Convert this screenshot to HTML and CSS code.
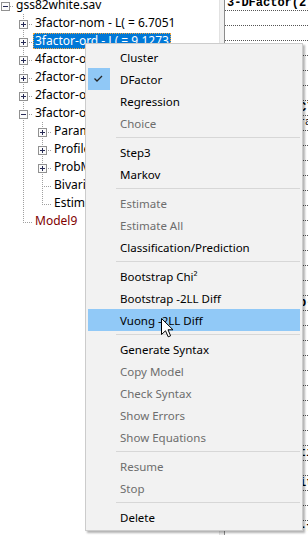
FILE: index.html
```html
<!DOCTYPE html>
<html>
  <head>
    <title>gss82white.sav</title>
    <link rel="stylesheet" href="styles.css">
  </head>
  <body>
    <div class="window">
      <div class="tree">
        <div class="tree-list">
          <div class="node">
            <span class="cell root"><span class="box minus"></span></span>
            <span class="label">gss82white.sav</span>
          </div>
          <div class="node">
            <span class="cell first"></span>
            <span class="cell tee"><span class="box plus"></span></span>
            <span class="label">3factor-nom - L( = 6.7051</span>
          </div>
          <div class="node">
            <span class="cell first"></span>
            <span class="cell tee"><span class="box plus"></span></span>
            <span class="label selected">3factor-ord - L( = 9.1273</span>
          </div>
          <div class="node">
            <span class="cell first"></span>
            <span class="cell tee"><span class="box plus"></span></span>
            <span class="label">4factor-ord - L( = 5.1068</span>
          </div>
          <div class="node">
            <span class="cell first"></span>
            <span class="cell tee"><span class="box plus"></span></span>
            <span class="label">2factor-ord - L( = 17.4820</span>
          </div>
          <div class="node">
            <span class="cell first"></span>
            <span class="cell tee"><span class="box plus"></span></span>
            <span class="label">2factor-ord - L( = 15.2031</span>
          </div>
          <div class="node">
            <span class="cell first"></span>
            <span class="cell tee"><span class="box minus"></span></span>
            <span class="label">3factor-ord - L( = 9.1273</span>
          </div>
          <div class="node">
            <span class="cell first"></span>
            <span class="cell vline"></span>
            <span class="cell tee"><span class="box plus"></span></span>
            <span class="label">Parameters</span>
          </div>
          <div class="node">
            <span class="cell first"></span>
            <span class="cell vline"></span>
            <span class="cell tee"><span class="box plus"></span></span>
            <span class="label">Profile</span>
          </div>
          <div class="node">
            <span class="cell first"></span>
            <span class="cell vline"></span>
            <span class="cell tee"><span class="box plus"></span></span>
            <span class="label">ProbMeans</span>
          </div>
          <div class="node">
            <span class="cell first"></span>
            <span class="cell vline"></span>
            <span class="cell tee"></span>
            <span class="label">Bivariate Residuals</span>
          </div>
          <div class="node">
            <span class="cell first"></span>
            <span class="cell vline"></span>
            <span class="cell elbow"></span>
            <span class="label">Estimated Values</span>
          </div>
          <div class="node">
            <span class="cell first"></span>
            <span class="cell elbow"></span>
            <span class="label model">Model9</span>
          </div>
        </div>
      </div>

      <div class="splitter"></div>

      <div class="output">
        <div class="out-list">
          <div class="out-row">3-DFactor(2)-ord</div>
          <div class="out-row"></div>
          <div class="out-row"></div>
          <div class="out-row"></div>
          <div class="out-row"></div>
          <div class="out-row"></div>
          <div class="out-row"></div>
          <div class="out-row">Model for Clusters</div>
          <div class="out-row small">Number of parameters (Npar)</div>
          <div class="out-row"></div>
          <div class="out-row"></div>
          <div class="out-row"></div>
          <div class="out-row"></div>
          <div class="out-row"></div>
          <div class="out-row"></div>
          <div class="out-row"></div>
          <div class="out-row"></div>
          <div class="out-row"></div>
          <div class="out-row"></div>
          <div class="out-row"></div>
          <div class="out-row">Bootstrap p-value</div>
          <div class="out-row"></div>
          <div class="out-row"></div>
          <div class="out-row"></div>
          <div class="out-row"></div>
          <div class="out-row"></div>
          <div class="out-row"></div>
          <div class="out-row"></div>
          <div class="out-row"></div>
          <div class="out-row"></div>
          <div class="out-row">Classification Diagnostics</div>
          <div class="out-row"></div>
          <div class="out-row">Dissimilarity Index</div>
          <div class="out-row"></div>
          <div class="out-row"></div>
          <div class="out-row dashed">-----------f</div>
        </div>
      </div>
    </div>

    <!-- context menu for the selected model -->
    <div class="menu">
      <div class="item"><span class="check"></span><span class="text">Cluster</span></div>
      <div class="item">
        <span class="check on">
          <svg width="22" height="22" viewBox="0 0 22 22"><path d="M6.5 10.5 L9 13 L14 8" fill="none" stroke="#262626" stroke-width="1.3"/></svg>
        </span>
        <span class="text">DFactor</span>
      </div>
      <div class="item"><span class="check"></span><span class="text">Regression</span></div>
      <div class="item disabled"><span class="check"></span><span class="text">Choice</span></div>
      <div class="sep"></div>
      <div class="item"><span class="check"></span><span class="text">Step3</span></div>
      <div class="item"><span class="check"></span><span class="text">Markov</span></div>
      <div class="sep"></div>
      <div class="item disabled"><span class="check"></span><span class="text">Estimate</span></div>
      <div class="item disabled"><span class="check"></span><span class="text">Estimate All</span></div>
      <div class="item"><span class="check"></span><span class="text">Classification/Prediction</span></div>
      <div class="sep"></div>
      <div class="item"><span class="check"></span><span class="text">Bootstrap Chi²</span></div>
      <div class="item"><span class="check"></span><span class="text">Bootstrap -2LL Diff</span></div>
      <div class="item hot"><span class="check"></span><span class="text">Vuong -2LL Diff</span></div>
      <div class="sep"></div>
      <div class="item"><span class="check"></span><span class="text">Generate Syntax</span></div>
      <div class="item disabled"><span class="check"></span><span class="text">Copy Model</span></div>
      <div class="item disabled"><span class="check"></span><span class="text">Check Syntax</span></div>
      <div class="item disabled"><span class="check"></span><span class="text">Show Errors</span></div>
      <div class="item disabled"><span class="check"></span><span class="text">Show Equations</span></div>
      <div class="sep"></div>
      <div class="item disabled"><span class="check"></span><span class="text">Resume</span></div>
      <div class="item disabled"><span class="check"></span><span class="text">Stop</span></div>
      <div class="sep"></div>
      <div class="item"><span class="check"></span><span class="text">Delete</span></div>
    </div>

    <svg class="cursor" width="13" height="20" viewBox="0 0 13 20">
      <path d="M0.5 0.5 L0.5 16.5 L4.5 12.8 L7.2 18.8 L9.6 17.8 L7 11.8 L12 11.8 Z" fill="#fff" stroke="#000" stroke-width="1" stroke-linejoin="miter"/>
    </svg>
  </body>
</html>
```

FILE: styles.css
```css
body {
  margin: 0;
  font-family: "Noto Sans", sans-serif;
  font-size: 12px;
  color: #000;
  background: #fff;
  overflow: hidden;
}
.window {
  display: flex;
  height: 535px;
}

/* tree */
.tree {
  width: 219px;
  flex: none;
  overflow: hidden;
}
.tree-list {
  margin-top: -4px;
}
.node {
  display: flex;
  height: 18px;
  white-space: nowrap;
}
.cell {
  flex: none;
  display: flex;
  width: 19px;
  height: 18px;
}
.cell.first {
  width: 18px;
}
.cell.root {
  width: 18px;
  background: repeating-linear-gradient(to right, #a0a0a0 0 1px, transparent 1px 2px) 10px 10px / 4px 1px no-repeat;
}
.cell.tee {
  background:
    repeating-linear-gradient(to right, #a0a0a0 0 1px, transparent 1px 2px) 5px 10px / 9px 1px no-repeat,
    repeating-linear-gradient(to bottom, #a0a0a0 0 1px, transparent 1px 2px) 5px 0 / 1px 18px no-repeat;
}
.cell.elbow {
  background:
    repeating-linear-gradient(to right, #a0a0a0 0 1px, transparent 1px 2px) 5px 10px / 9px 1px no-repeat,
    repeating-linear-gradient(to bottom, #a0a0a0 0 1px, transparent 1px 2px) 5px 0 / 1px 11px no-repeat;
}
.cell.vline {
  background: repeating-linear-gradient(to bottom, #a0a0a0 0 1px, transparent 1px 2px) 5px 0 / 1px 18px no-repeat;
}
.box {
  box-sizing: border-box;
  width: 9px;
  height: 9px;
  margin: 6px 0 0 1px;
  border: 1px solid #919191;
  background-color: #fbfbfb;
}
.box.minus {
  background-image: linear-gradient(#262a55, #262a55);
  background-size: 5px 1px;
  background-position: center;
  background-repeat: no-repeat;
}
.box.plus {
  background-image: linear-gradient(#262a55, #262a55), linear-gradient(#262a55, #262a55);
  background-size: 5px 1px, 1px 5px;
  background-position: center, center;
  background-repeat: no-repeat;
}
.label {
  margin-left: -4px;
  padding: 0 2px;
  height: 16px;
  line-height: 16px;
  margin-top: 1px;
}
.label.selected {
  background: #0078d7;
  color: #fff;
  outline: 1px dotted #f4a53c;
  outline-offset: -1px;
}
.label.model {
  color: #800000;
}

/* splitter between panes */
.splitter {
  width: 6px;
  flex: none;
  box-sizing: border-box;
  background: #f0f0f0;
  border-left: 1px solid #e2e2e2;
  border-right: 1px solid #8c8c8c;
}

/* output pane */
.output {
  flex: 1;
  overflow: hidden;
  font-family: "Liberation Mono", monospace;
  font-weight: bold;
  font-size: 12px;
}
.out-list {
  margin-top: -4px;
}
.out-row {
  box-sizing: border-box;
  height: 15px;
  line-height: 14px;
  padding-left: 2px;
  white-space: nowrap;
  border-bottom: 1px dotted #555;
}
.out-row.small {
  font-size: 10px;
  font-weight: normal;
}
.out-row.dashed {
  border-bottom: none;
}

/* context menu */
.menu {
  position: absolute;
  left: 85px;
  top: 43px;
  width: 218px;
  box-sizing: border-box;
  padding: 2px;
  border: 1px solid #cccccc;
  background: #f2f2f2;
  box-shadow: 2px 2px 2px rgba(0, 0, 0, 0.3);
  font-size: 11.5px;
}
.item {
  display: flex;
  align-items: center;
  height: 22px;
  white-space: nowrap;
}
.item.hot {
  background: #91c9f7;
}
.item.disabled {
  color: #6d6d6d;
}
.check {
  flex: none;
  width: 22px;
  height: 22px;
}
.check.on {
  background: #90c8f6;
}
.check svg {
  display: block;
}
.text {
  padding-left: 10px;
}
.sep {
  height: 7px;
  margin-left: 28px;
  background: linear-gradient(#d7d7d7, #d7d7d7) 0 3px / 100% 1px no-repeat;
}

.cursor {
  position: absolute;
  left: 161px;
  top: 318px;
}
```
